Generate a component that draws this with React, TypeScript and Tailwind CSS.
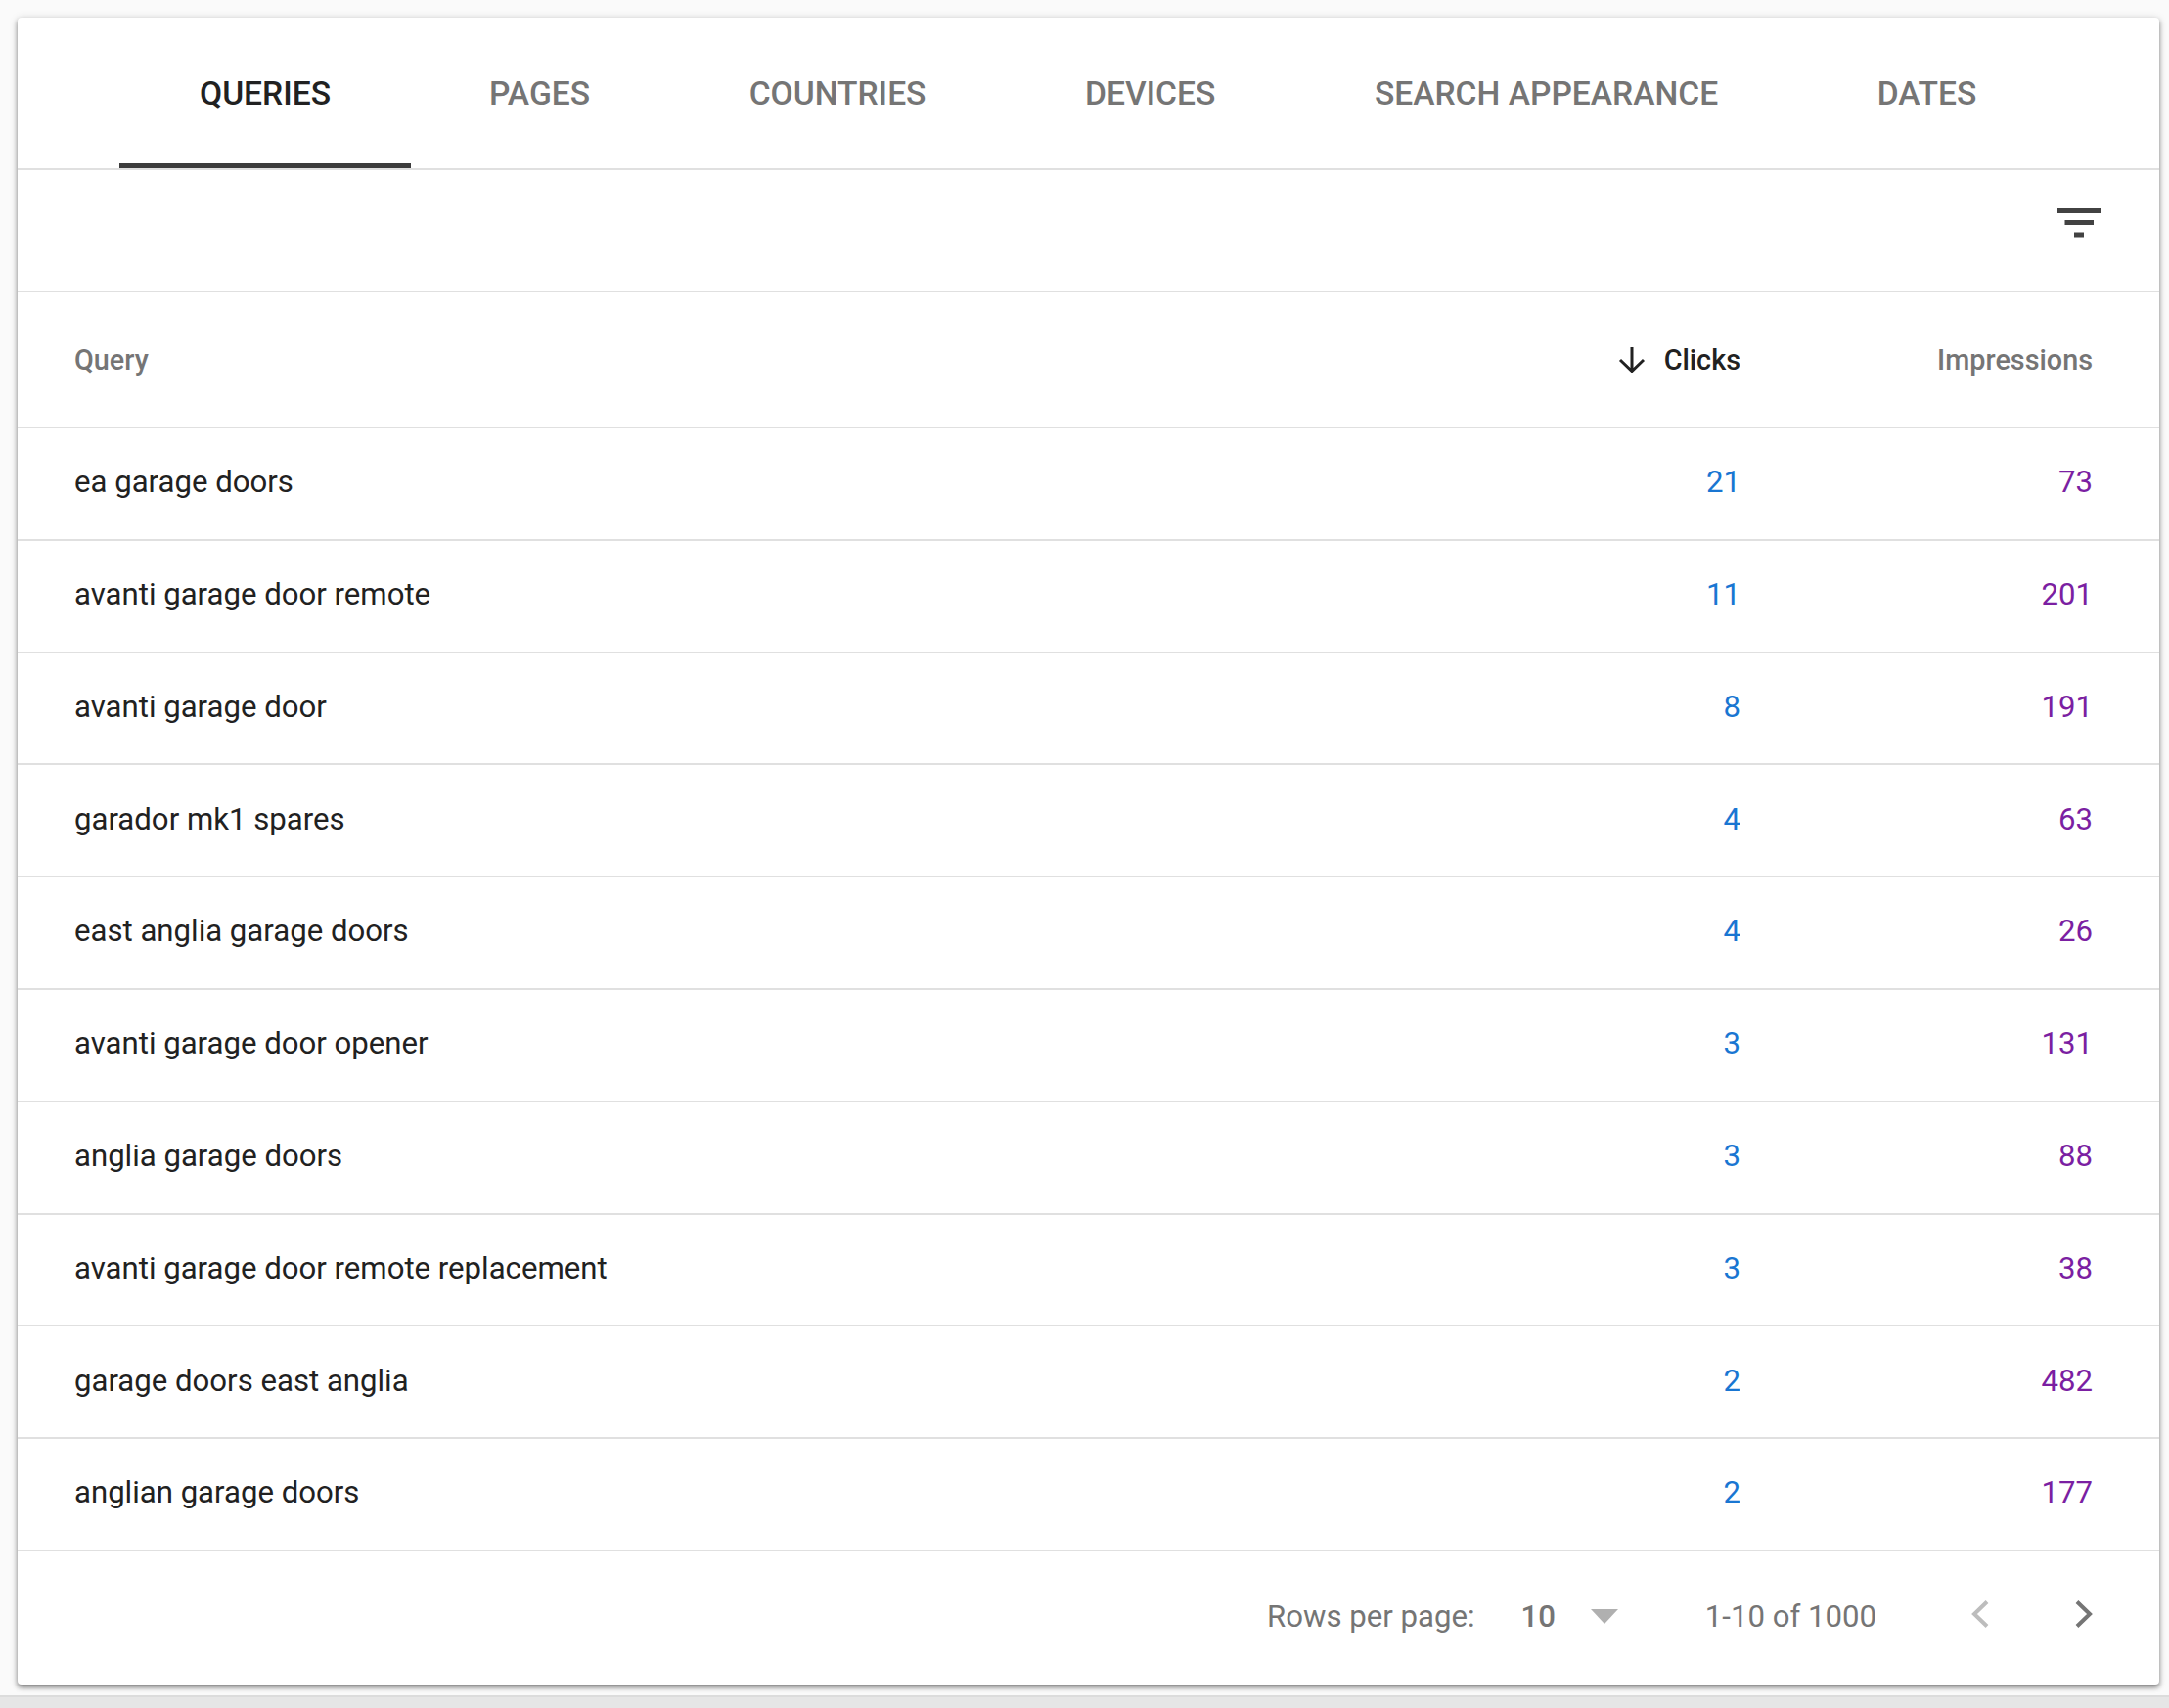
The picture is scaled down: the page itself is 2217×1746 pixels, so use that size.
import React from 'react'

const rows = [
  ['ea garage doors', '21', '73'],
  ['avanti garage door remote', '11', '201'],
  ['avanti garage door', '8', '191'],
  ['garador mk1 spares', '4', '63'],
  ['east anglia garage doors', '4', '26'],
  ['avanti garage door opener', '3', '131'],
  ['anglia garage doors', '3', '88'],
  ['avanti garage door remote replacement', '3', '38'],
  ['garage doors east anglia', '2', '482'],
  ['anglian garage doors', '2', '177'],
]

const tabs = ['QUERIES', 'PAGES', 'COUNTRIES', 'DEVICES', 'SEARCH APPEARANCE', 'DATES']

export default function App() {
  return (
    <div className="h-[1746px] w-[2217px] flex flex-col bg-[#fafafa] font-['Roboto',sans-serif] overflow-hidden">
      <div className="flex-1 pt-[18px] pl-[18px] pr-[10px]">
        <div className="h-[1704px] bg-white rounded-[4px] flex flex-col shadow-[0_3px_5px_rgba(0,0,0,0.42),0_1px_8px_rgba(0,0,0,0.15)]">
          {/* tabs */}
          <div className="h-[156px] flex pl-[104px] border-b-2 border-[#e0e0e0]">
            {tabs.map((t, i) => (
              <div
                key={t}
                className={
                  i === 0
                    ? "h-[154px] px-[82px] mr-[-1.4px] pt-[58px] border-b-[5px] border-[#3c3c3c] text-[33.6px] leading-[40px] font-medium text-[#212121] whitespace-nowrap"
                    : "h-[154px] px-[81.3px] pt-[58px] text-[33.6px] leading-[40px] font-medium text-[#757575] whitespace-nowrap"
                }
              >
                {t}
              </div>
            ))}
          </div>

          {/* filter bar */}
          <div className="h-[125px] flex justify-end pt-[39px] pr-[60px] border-b-2 border-[#e0e0e0]">
            <svg width="44" height="30" viewBox="0 0 44 30" fill="#424242">
              <rect x="0" y="0" width="44" height="5" />
              <rect x="7.5" y="12" width="29.5" height="5" />
              <rect x="17" y="24.5" width="10" height="5" />
            </svg>
          </div>

          {/* header */}
          <div className="h-[139px] flex items-center pt-[2px] pl-[58px] pr-[68px] border-b-2 border-[#e0e0e0] text-[28.8px] font-medium">
            <div className="flex-1 text-[#757575]">Query</div>
            <div className="flex items-center gap-[19px] text-[#212121]">
              <svg className="mb-[2px]" width="28" height="26" viewBox="0 0 28 26" fill="none" stroke="#212121" strokeWidth="3">
                <path d="M14 0V24M2 13L14 24.5L26 13" />
              </svg>
              Clicks
            </div>
            <div className="w-[360px] text-right text-[#757575]">Impressions</div>
          </div>

          {/* rows */}
          {rows.map((r) => (
            <div key={r[0]} className="h-[114.8px] flex items-center pb-[1.5px] pl-[58px] pr-[68px] border-b-2 border-[#e0e0e0] text-[31.15px]">
              <div className="flex-1 text-[#212121]">{r[0]}</div>
              <div className="text-[#1976d2]">{r[1]}</div>
              <div className="w-[360px] text-right text-[#7b1fa2]">{r[2]}</div>
            </div>
          ))}

          {/* pagination */}
          <div className="flex-1 flex items-center justify-end pb-[2px] pr-[67px] text-[31.15px] text-[#757575]">
            <span>Rows per page:</span>
            <span className="ml-[47px] font-medium">10</span>
            <svg className="ml-[36px]" width="28" height="15" viewBox="0 0 28 15" fill="#b0b0b0">
              <path d="M0 0H28L14 15Z" />
            </svg>
            <span className="ml-[89px]">1-10 of 1000</span>
            <svg className="ml-[97px] mb-[6px]" width="18" height="28" viewBox="0 0 18 28" fill="none" stroke="#bdbdbd" strokeWidth="4">
              <path d="M16 1.5L3 14L16 26.5" />
            </svg>
            <svg className="ml-[88px] mb-[6px]" width="19" height="28" viewBox="0 0 19 28" fill="none" stroke="#757575" strokeWidth="4">
              <path d="M2 1.5L15 14L2 26.5" />
            </svg>
          </div>
        </div>
      </div>
      <div className="h-[13px] bg-[#e6e6e6] border-t-2 border-[#dcdcdc]"></div>
    </div>
  )
}
